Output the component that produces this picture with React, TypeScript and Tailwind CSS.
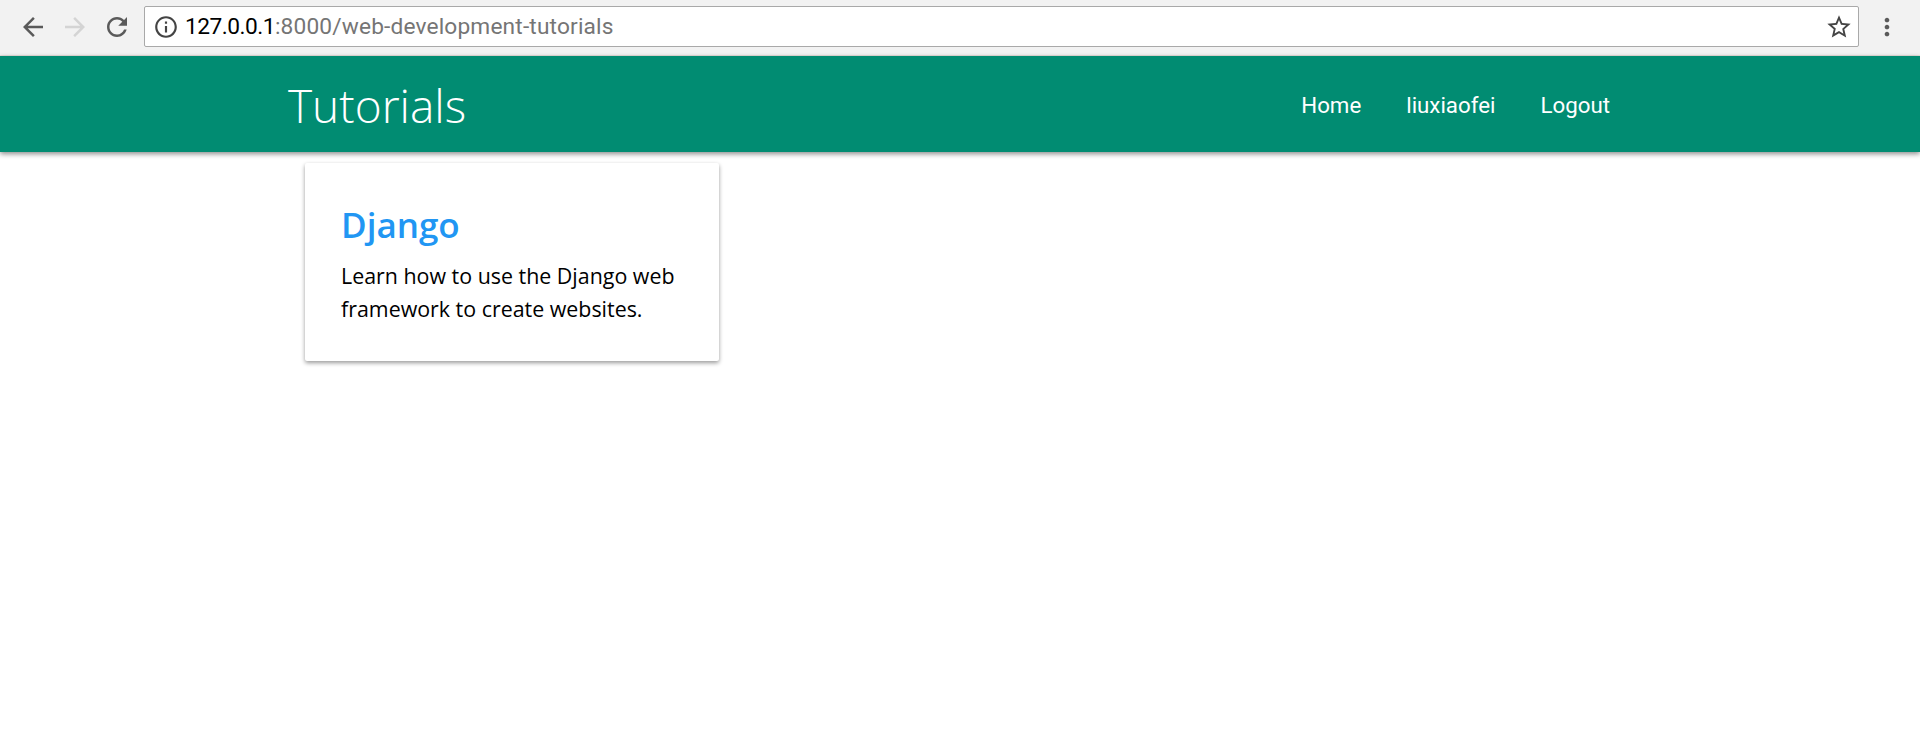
import React from 'react';

const NavLink: React.FC<{ label: string }> = ({ label }) => (
  <a className="text-[22.3px] leading-[30px] text-white font-['Roboto',sans-serif]">{label}</a>
);

const Icon: React.FC<{ d: string; className: string }> = ({ d, className }) => (
  <svg viewBox="0 0 24 24" className={className} fill="currentColor">
    <path d={d} />
  </svg>
);

const BrowserBar = () => (
  <div className="flex items-center h-[56px] bg-[#f2f2f2] border-b border-[#e8e0dc] pb-px">
    <div className="flex items-center w-[144px] pl-[18px] gap-[12px]">
      <Icon className="w-[30px] h-[30px] text-[#5a5a5a]" d="M20 11H7.83l5.59-5.59L12 4l-8 8 8 8 1.41-1.41L7.83 13H20v-2z" />
      <Icon className="w-[30px] h-[30px] text-[#d4d4d4]" d="M12 4l-1.41 1.41L16.17 11H4v2h12.17l-5.58 5.59L12 20l8-8z" />
      <Icon className="w-[30px] h-[30px] text-[#5a5a5a]" d="M17.65 6.35C16.2 4.9 14.21 4 12 4c-4.42 0-7.99 3.58-7.99 8s3.57 8 7.99 8c3.73 0 6.84-2.55 7.73-6h-2.08c-.82 2.33-3.04 4-5.65 4-3.31 0-6-2.69-6-6s2.69-6 6-6c1.66 0 3.14.69 4.22 1.78L13 11h7V4l-2.35 2.35z" />
    </div>
    <div className="flex items-center w-[1715px] h-[41px] -mt-px bg-white border border-[#a9a9a9] rounded-[2px] pl-[8px] pr-[5px]">
      <Icon className="w-[26px] h-[26px] text-[#444]" d="M11 7h2v2h-2zm0 4h2v6h-2zm1-9C6.48 2 2 6.48 2 12s4.48 10 10 10 10-4.48 10-10S17.52 2 12 2zm0 18c-4.41 0-8-3.59-8-8s3.59-8 8-8 8 3.59 8 8-3.59 8-8 8z" />
      <div className="ml-[6px] text-[22.7px] leading-[30px] tracking-[0.16px] font-['Roboto',sans-serif] text-[#757575]">
        <span className="text-black tracking-[-0.5px]">127.0.0.1</span>:8000/web-development-tutorials
      </div>
      <Icon className="ml-auto w-[28px] h-[28px] text-[#444]" d="M22 9.24l-7.19-.62L12 2 9.19 8.63 2 9.24l5.46 4.73L5.82 21 12 17.27 18.18 21l-1.63-7.03L22 9.24zM12 15.4l-3.76 2.27 1-4.28-3.32-2.88 4.38-.38L12 6.1l1.71 4.04 4.38.38-3.32 2.88 1 4.28L12 15.4z" />
    </div>
    <div className="flex flex-1 justify-center pr-[5px]">
      <Icon className="w-[28px] h-[28px] text-[#5a5a5a]" d="M12 8c1.1 0 2-.9 2-2s-.9-2-2-2-2 .9-2 2 .9 2 2 2zm0 2c-1.1 0-2 .9-2 2s.9 2 2 2 2-.9 2-2-.9-2-2-2zm0 6c-1.1 0-2 .9-2 2s.9 2 2 2 2-.9 2-2-.9-2-2-2z" />
    </div>
  </div>
);

const App: React.FC = () => {
  return (
    <div className="min-h-[733px] bg-white">
      <BrowserBar />
      <nav className="relative flex items-center justify-between h-[96px] bg-[#018c72] pl-[288px] pr-[310px] shadow-[0_2px_5px_rgba(0,0,0,0.45)]">
        <a className="mt-[2px] text-[46px] leading-[60px] font-light text-white font-['Open_Sans',sans-serif]">Tutorials</a>
        <div className="flex items-center gap-[45px] mt-[1px]">
          <NavLink label="Home" />
          <NavLink label="liuxiaofei" />
          <NavLink label="Logout" />
        </div>
      </nav>
      <div className="pl-[305px] pt-[11px]">
        <div className="w-[414px] h-[198px] bg-white rounded-[2px] pl-[36px] pr-[37px] pt-[39px] shadow-[0_2px_4px_rgba(0,0,0,0.4)]">
          <h2 className="text-[35px] leading-[46px] font-semibold text-[#2196f3] font-['Open_Sans',sans-serif]">Django</h2>
          <p className="mt-[11px] text-[21.4px] leading-[33px] text-black font-['Open_Sans',sans-serif]">
            Learn how to use the Django web framework to create websites.
          </p>
        </div>
      </div>
    </div>
  );
};

export default App;
